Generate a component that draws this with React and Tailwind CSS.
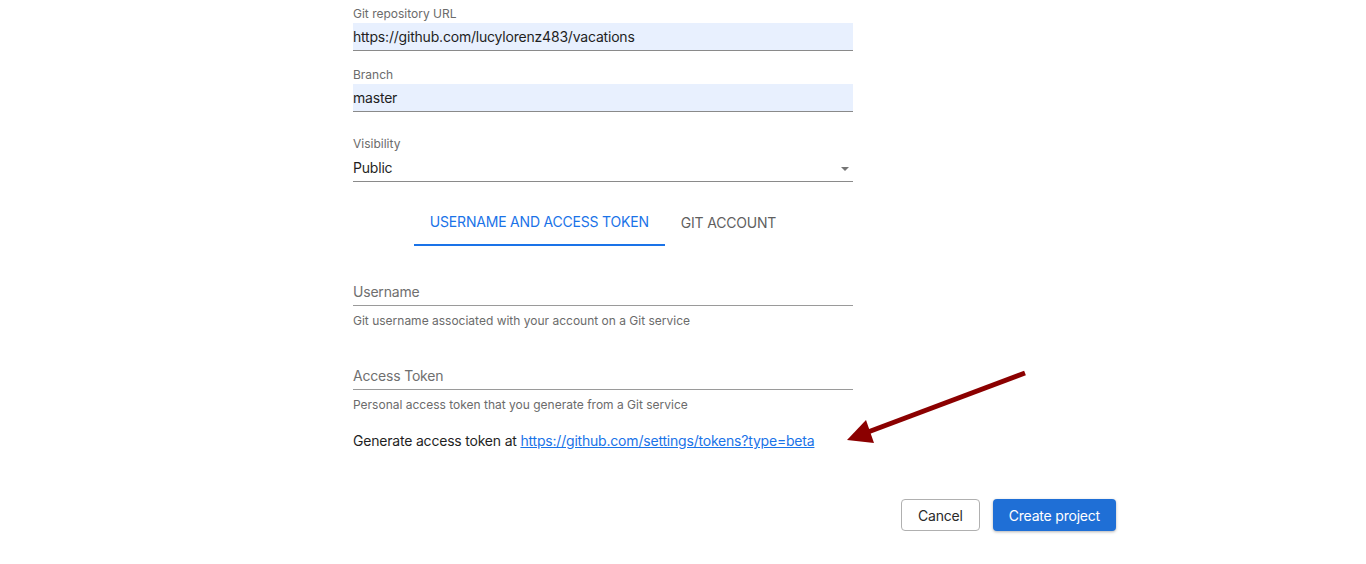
import React from 'react';

const font = { fontFamily: 'Inter, "Noto Sans", sans-serif' };

const FilledField = ({ label, value }) => (
  <div>
    <div className="text-[12px] leading-4 text-[#6b6b6b]">{label}</div>
    <div className="mt-[1px] h-7 bg-[#e8f0fe] border-b border-[#8a8a8a] flex items-center text-[14px] tracking-[-0.2px] text-[#1f1f1f]">
      {value}
    </div>
  </div>
);

const LineField = ({ placeholder, helper }) => (
  <div>
    <div className="h-7 border-b border-[#9a9a9a] flex items-center text-[14px] tracking-[-0.2px] text-[#6f6f6f]">
      {placeholder}
    </div>
    <div className="mt-[7px] text-[12px] leading-4 text-[#6b6b6b]">{helper}</div>
  </div>
);

export default function App() {
  return (
    <div className="relative w-[1366px] h-[564px] bg-white overflow-hidden" style={font}>
      <div className="ml-[353px] w-[500px] pt-[6px]">
        <FilledField label="Git repository URL" value="https://github.com/lucylorenz483/vacations" />
        <div className="mt-[16px]">
          <FilledField label="Branch" value="master" />
        </div>

        <div className="mt-[24px]">
          <div className="text-[12px] leading-4 text-[#6b6b6b]">Visibility</div>
          <div className="mt-[2px] h-7 border-b border-[#8a8a8a] flex items-center justify-between text-[14px] tracking-[-0.2px] text-[#1f1f1f]">
            <span>Public</span>
            <svg width="8" height="4" viewBox="0 0 8 4" className="mr-[4px] mt-[2px]">
              <path d="M0 0 L8 0 L4 4 Z" fill="#757575" />
            </svg>
          </div>
        </div>

        <div className="mt-[16px] flex justify-center tracking-[-0.2px]">
          <div className="h-12 px-4 flex items-center text-[14px] text-[#1a73e8] border-b-2 border-[#1a73e8]">
            USERNAME AND ACCESS TOKEN
          </div>
          <div className="h-12 px-4 flex items-center text-[14px] text-[#5f5f5f]">
            GIT ACCOUNT
          </div>
        </div>

        <div className="mt-[32px]">
          <LineField placeholder="Username" helper="Git username associated with your account on a Git service" />
        </div>
        <div className="mt-[33px]">
          <LineField placeholder="Access Token" helper="Personal access token that you generate from a Git service" />
        </div>

        <div className="mt-[18px] text-[14px] leading-5 tracking-[-0.2px] text-[#1f1f1f]">
          Generate access token at{' '}
          <a href="#" className="text-[#1a73e8] underline">https://github.com/settings/tokens?type=beta</a>
        </div>
      </div>

      <div className="mt-[48px] flex justify-end gap-[13px] pr-[250px] tracking-[-0.2px]">
        <button className="h-8 px-4 rounded-[4px] border border-[#b0b0b0] bg-white text-[14px] text-[#2a2a2a]">
          Cancel
        </button>
        <button className="h-8 px-4 rounded-[4px] bg-[#1f6fd6] text-[14px] text-white shadow-[0_1px_3px_rgba(0,0,0,0.3)]">
          Create project
        </button>
      </div>

      <svg className="absolute left-0 top-0 pointer-events-none" width="1366" height="564">
        <line x1="1025" y1="373" x2="868" y2="432" stroke="#8b0000" strokeWidth="5" />
        <path d="M847 440 L866 420 L874 443 Z" fill="#8b0000" />
      </svg>
    </div>
  );
}
